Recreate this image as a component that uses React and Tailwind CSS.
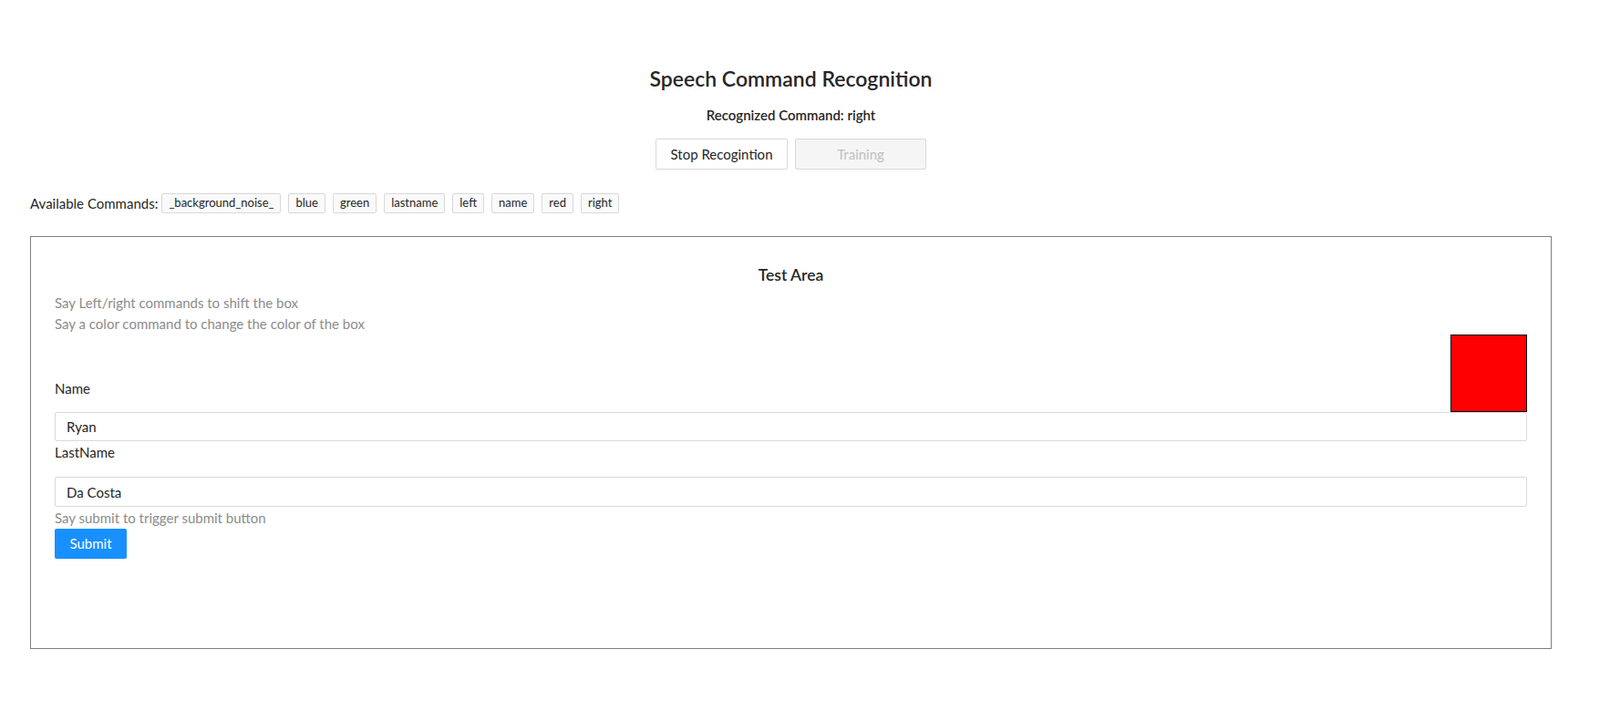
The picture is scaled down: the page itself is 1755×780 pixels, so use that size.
import { useState } from "react";

const commands = [
  "_background_noise_",
  "blue",
  "green",
  "lastname",
  "left",
  "name",
  "red",
  "right",
];

export default function App() {
  const [name, setName] = useState("Ryan");
  const [lastName, setLastName] = useState("Da Costa");

  return (
    <div className="min-h-screen bg-white font-['Lato','Liberation_Sans',sans-serif] text-[#262626]">
      <div className="ml-[33px] w-[1669px]">
        {/* HEADER */}
        <div className="pt-[70px] text-center">
          <h1 className="text-[23px] leading-[32px] font-semibold">
            Speech Command Recognition
          </h1>
          <p className="mt-[12px] text-[15px] leading-[24px] font-semibold">
            Recognized Command: right
          </p>
          <div className="mt-[14px] flex justify-center gap-2">
            <button className="h-[34px] w-[145px] rounded-[2px] border border-[#d9d9d9] bg-white text-[15px] shadow-[0_2px_0_rgba(0,0,0,0.015)]">
              Stop Recogintion
            </button>
            <button
              disabled
              className="h-[34px] w-[144px] rounded-[2px] border border-[#d9d9d9] bg-[#f5f5f5] text-[15px] text-[#bfbfbf]"
            >
              Training
            </button>
          </div>
        </div>

        {/* COMMANDS */}
        <div className="mt-[26px] flex h-[22px] items-center">
          <span className="mr-[4px] text-[15px]">Available Commands:</span>
          {commands.map((cmd) => (
            <span
              key={cmd}
              className="mr-[8px] flex h-[22px] items-center rounded-[2px] border border-[#d9d9d9] bg-[#fafafa] px-[7px] text-[13px]"
            >
              {cmd}
            </span>
          ))}
        </div>

        {/* TEST AREA */}
        <div className="mt-[25px] h-[453px] w-full border border-[#808080] px-[26px] pt-[29px]">
          <h4 className="text-center text-[17.5px] leading-[26px] font-semibold">
            Test Area
          </h4>
          <div className="mt-[6px] text-[15px] leading-[23px] text-[#8c8c8c]">
            <p>Say Left/right commands to shift the box</p>
            <p>Say a color command to change the color of the box</p>
          </div>

          <div className="flex items-end justify-between">
            <label className="mb-[14px] text-[15px] leading-[24px]">Name</label>
            <div className="h-[85px] w-[84px] border border-black bg-[#ff0000]" />
          </div>
          <input
            value={name}
            onChange={(e) => setName(e.target.value)}
            className="block h-[32px] w-full rounded-[2px] border border-[#d9d9d9] px-[12px] text-[15px] outline-none"
          />
          <label className="block text-[15px] leading-[25px]">LastName</label>
          <input
            value={lastName}
            onChange={(e) => setLastName(e.target.value)}
            className="mt-[14px] block h-[33px] w-full rounded-[2px] border border-[#d9d9d9] px-[12px] text-[15px] outline-none"
          />
          <p className="text-[15px] leading-[24px] text-[#8c8c8c]">
            Say submit to trigger submit button
          </p>
          <button className="h-[33px] w-[79px] rounded-[2px] bg-[#1890ff] text-[15px] text-white">
            Submit
          </button>
        </div>
      </div>
    </div>
  );
}
